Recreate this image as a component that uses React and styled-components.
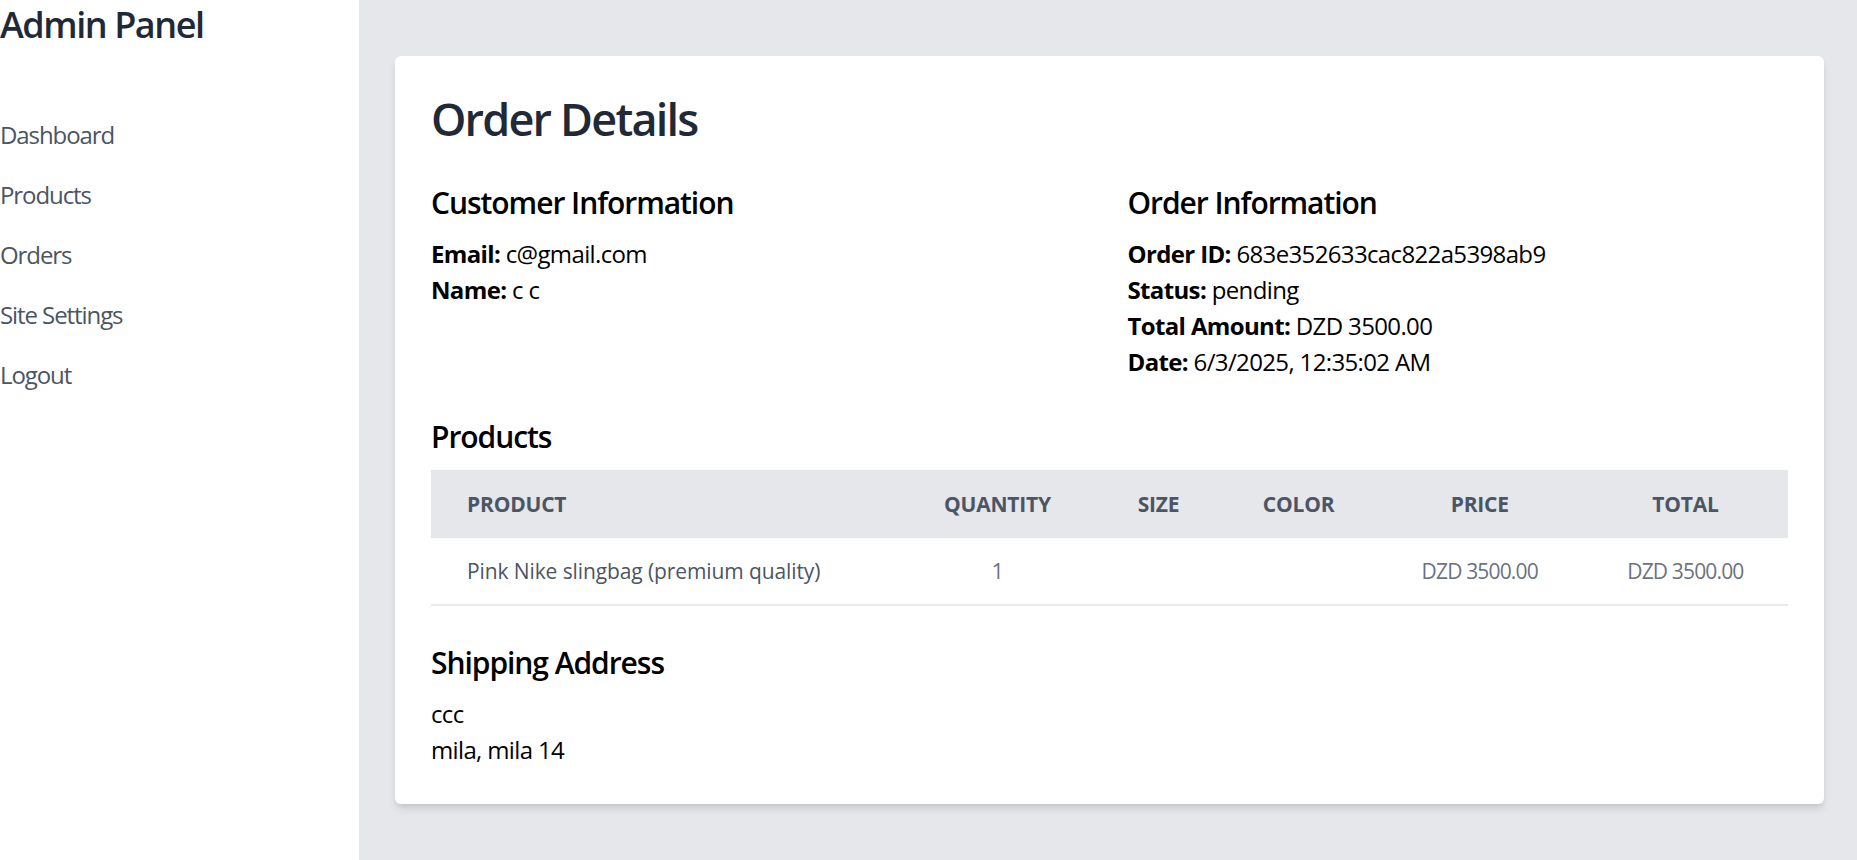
import React from 'react'
import styled, { createGlobalStyle } from 'styled-components'

const GlobalStyle = createGlobalStyle`
  html, body {
    margin: 0;
    padding: 0;
    background: #e5e7eb;
    font-family: 'Open Sans', 'Noto Sans', sans-serif;
    letter-spacing: -0.04em;
  }
`

const Layout = styled.div`
  display: flex;
  min-height: 100vh;
`

const Sidebar = styled.aside`
  width: 359px;
  flex-shrink: 0;
  background: #ffffff;
`

const Brand = styled.h1`
  margin: 0;
  font-size: 36px;
  line-height: 49px;
  font-weight: 600;
  letter-spacing: -0.04em;
  color: #1f2937;
`

const Nav = styled.nav`
  display: flex;
  flex-direction: column;
  margin-top: 56px;
`

const NavLink = styled.a`
  display: block;
  padding: 12px 0;
  font-size: 24px;
  line-height: 36px;
  letter-spacing: -0.045em;
  color: #4b5563;
  text-decoration: none;
  cursor: pointer;
`

const Main = styled.main`
  flex: 1;
  padding: 56px 33px 58px 36px;
`

const Card = styled.section`
  background: #ffffff;
  border-radius: 6px;
  padding: 36px;
  box-shadow: 0 6px 9px -1.5px rgba(0, 0, 0, 0.1), 0 3px 6px -3px rgba(0, 0, 0, 0.1);
`

const Title = styled.h2`
  margin: 0 0 36px;
  font-size: 45px;
  line-height: 54px;
  font-weight: 600;
  letter-spacing: -0.04em;
  color: #1f2937;
`

const InfoGrid = styled.div`
  display: grid;
  grid-template-columns: 1fr 1fr;
  gap: 36px;
`

const Block = styled.div`
  margin-top: ${(p) => (p.$spaced ? '36px' : '0')};
`

const SectionTitle = styled.h3`
  margin: 0 0 12px;
  font-size: 30px;
  line-height: 42px;
  font-weight: 600;
  letter-spacing: -0.035em;
  color: #000;
`

const Line = styled.p`
  margin: 0;
  font-size: 24px;
  line-height: 36px;
  color: #000;

  & strong {
    font-weight: 700;
  }
`

const Table = styled.table`
  width: 100%;
  border-collapse: collapse;
  table-layout: fixed;
`

const Th = styled.th`
  background: #e5e7eb;
  padding: 19px 36px;
  font-size: 21px;
  line-height: 30px;
  font-weight: 700;
  letter-spacing: -0.01em;
  text-transform: uppercase;
  color: #4b5563;
  text-align: ${(p) => (p.$left ? 'left' : 'center')};
  white-space: nowrap;
`

const Td = styled.td`
  padding: 18px 36px;
  font-size: 21px;
  line-height: 30px;
  border-bottom: 2px solid #e9eaed;
  text-align: ${(p) => (p.$left ? 'left' : 'center')};
  color: ${(p) => (p.$strong ? '#4b5563' : '#6b7280')};
  font-weight: ${(p) => (p.$strong ? 500 : 400)};
  letter-spacing: ${(p) => (p.$strong ? '-0.005em' : '-0.04em')};
  white-space: nowrap;
`

const columns = [
  { key: 'product', label: 'Product', width: 467 },
  { key: 'quantity', label: 'Quantity', width: 198 },
  { key: 'size', label: 'Size', width: 124 },
  { key: 'color', label: 'Color', width: 156 },
  { key: 'price', label: 'Price', width: 206 },
  { key: 'total', label: 'Total', width: 205 },
]

const items = [
  {
    product: 'Pink Nike slingbag (premium quality)',
    quantity: '1',
    size: '',
    color: '',
    price: 'DZD 3500.00',
    total: 'DZD 3500.00',
  },
]

const navItems = ['Dashboard', 'Products', 'Orders', 'Site Settings', 'Logout']

export default function App() {
  return (
    <>
      <GlobalStyle />
      <Layout>
        <Sidebar>
          <Brand>Admin Panel</Brand>
          <Nav>
            {navItems.map((item) => (
              <NavLink key={item}>{item}</NavLink>
            ))}
          </Nav>
        </Sidebar>
        <Main>
          <Card>
            <Title>Order Details</Title>
            <InfoGrid>
              <div>
                <SectionTitle>Customer Information</SectionTitle>
                <Line><strong>Email:</strong> c@gmail.com</Line>
                <Line><strong>Name:</strong> c c</Line>
              </div>
              <div>
                <SectionTitle>Order Information</SectionTitle>
                <Line><strong>Order ID:</strong> 683e352633cac822a5398ab9</Line>
                <Line><strong>Status:</strong> pending</Line>
                <Line><strong>Total Amount:</strong> DZD 3500.00</Line>
                <Line><strong>Date:</strong> 6/3/2025, 12:35:02 AM</Line>
              </div>
            </InfoGrid>

            <Block $spaced>
              <SectionTitle>Products</SectionTitle>
              <Table>
                <colgroup>
                  {columns.map((c) => (
                    <col key={c.key} style={{ width: c.width }} />
                  ))}
                </colgroup>
                <thead>
                  <tr>
                    {columns.map((c, i) => (
                      <Th key={c.key} $left={i === 0}>{c.label}</Th>
                    ))}
                  </tr>
                </thead>
                <tbody>
                  {items.map((row, r) => (
                    <tr key={r}>
                      {columns.map((c, i) => (
                        <Td key={c.key} $left={i === 0} $strong={i === 0}>{row[c.key]}</Td>
                      ))}
                    </tr>
                  ))}
                </tbody>
              </Table>
            </Block>

            <Block $spaced>
              <SectionTitle>Shipping Address</SectionTitle>
              <Line>ccc</Line>
              <Line>mila, mila 14</Line>
            </Block>
          </Card>
        </Main>
      </Layout>
    </>
  )
}
